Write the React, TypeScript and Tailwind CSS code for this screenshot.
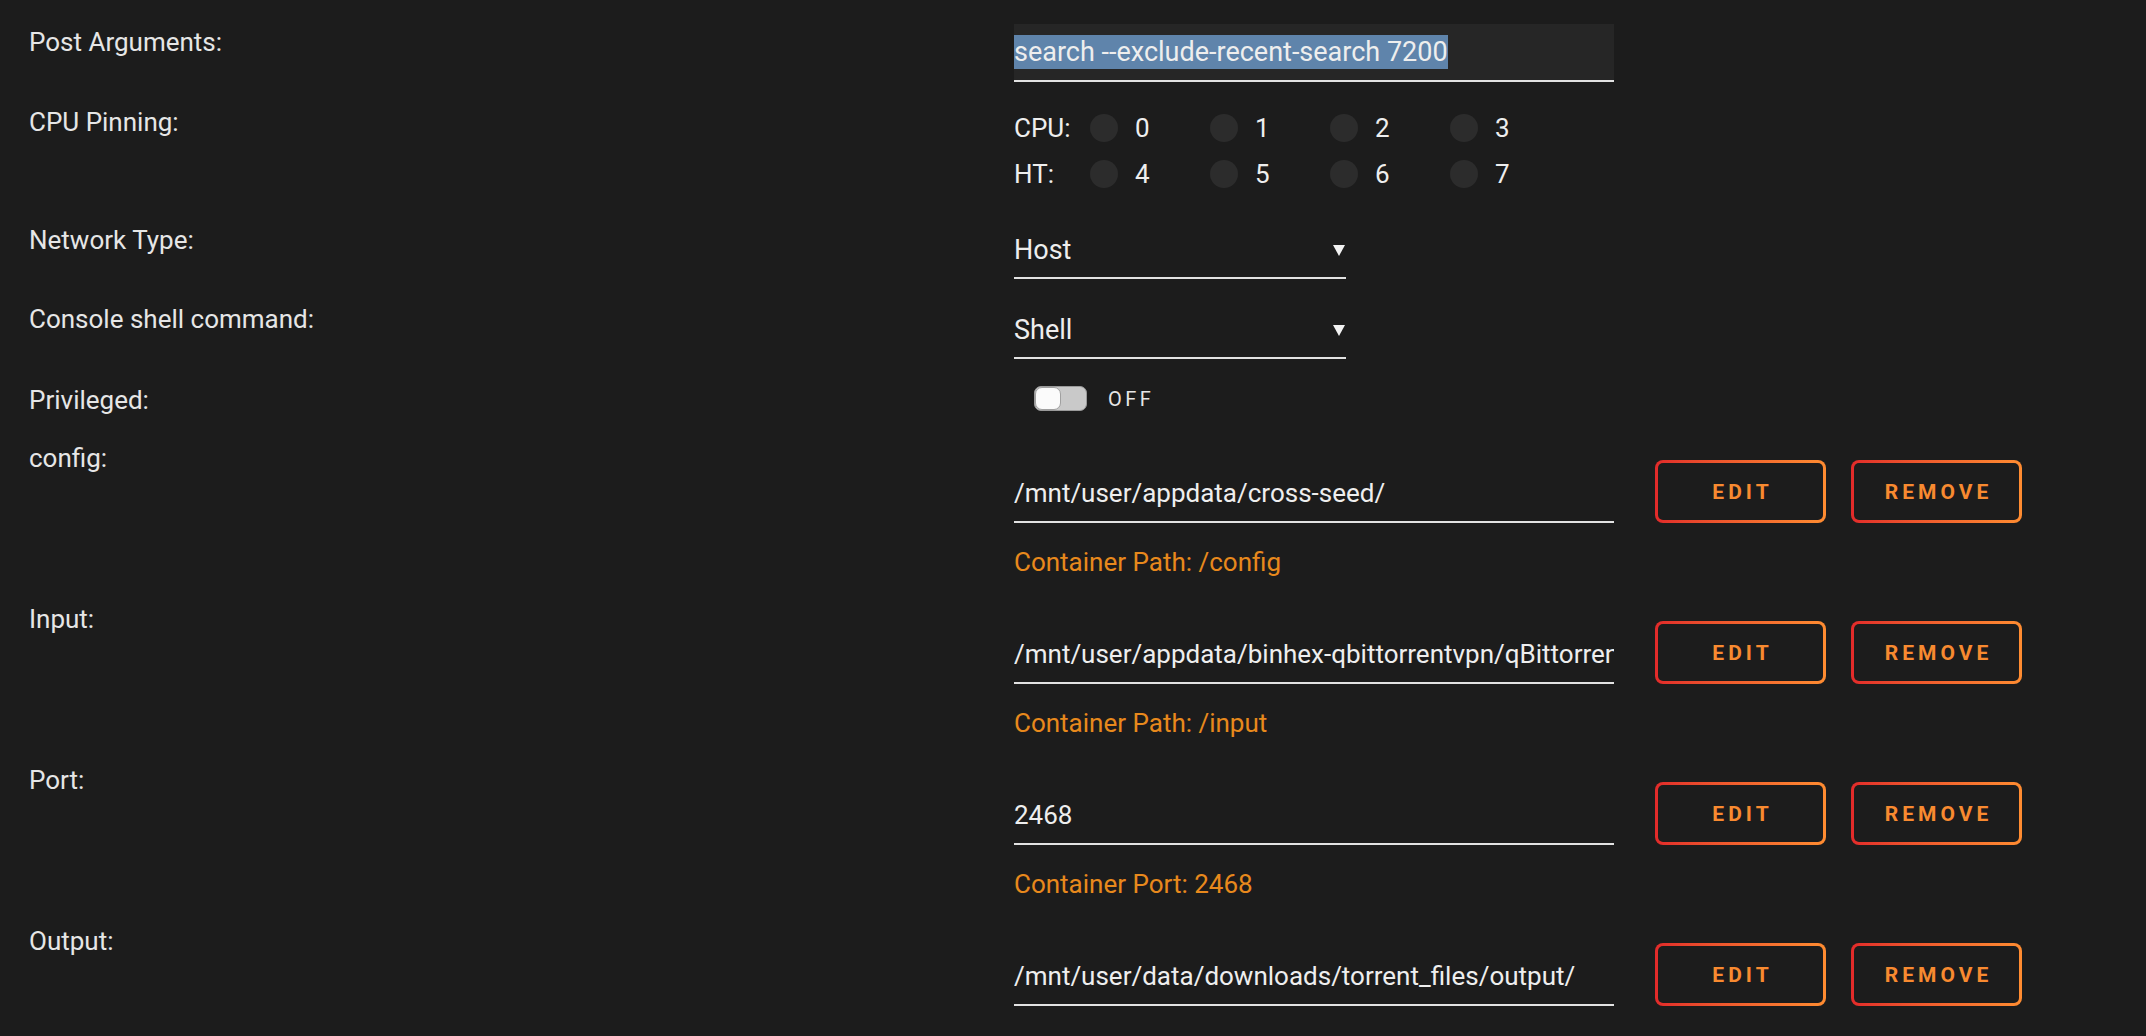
import type { ReactNode } from "react";

type Mapping = {
  label: string;
  host: string;
  hint: string;
};

const MAPPINGS: Mapping[] = [
  { label: "config:", host: "/mnt/user/appdata/cross-seed/", hint: "Container Path: /config" },
  {
    label: "Input:",
    host: "/mnt/user/appdata/binhex-qbittorrentvpn/qBittorrent/data/BT_backup/",
    hint: "Container Path: /input",
  },
  { label: "Port:", host: "2468", hint: "Container Port: 2468" },
  { label: "Output:", host: "/mnt/user/data/downloads/torrent_files/output/", hint: "" },
];

const CPUS = [
  { name: "CPU:", cores: [0, 1, 2, 3] },
  { name: "HT:", cores: [4, 5, 6, 7] },
];

function Label({ children, pad = "pt-0" }: { children: ReactNode; pad?: string }) {
  return (
    <div className={`w-[1014px] shrink-0 pl-[29px] text-[26px] leading-[30px] text-[#e6e6e6] ${pad}`}>
      {children}
    </div>
  );
}

function OutlineButton({ children }: { children: ReactNode }) {
  return (
    <button
      type="button"
      className="h-[63px] w-[171px] rounded-[8px] bg-gradient-to-r from-[#e22a2a] to-[#ff8c31] p-[3px]"
    >
      <span className="flex h-full w-full items-center justify-center rounded-[5px] bg-[#1c1c1c] pl-[4px] pt-[3px] text-[21px] font-bold tracking-[4px] text-[#f88a30]">
        {children}
      </span>
    </button>
  );
}

function Select({ value }: { value: string }) {
  return (
    <div className="flex h-[56px] w-[332px] items-center justify-between border-b-2 border-[#e2e2e2] text-[27px] text-[#eeeeee]">
      <span>{value}</span>
      <svg width="12" height="12" viewBox="0 0 12 12" className="mr-[1px]">
        <polygon points="0,1 12,1 6,12" fill="#f2f2f2" />
      </svg>
    </div>
  );
}

export default function App() {
  return (
    <div className="min-h-screen bg-[#1c1c1c] pt-[24px] font-['Roboto','Liberation_Sans',sans-serif] text-[#eeeeee]">
      {/* post arguments */}
      <div className="flex">
        <Label pad="pt-[3px]">Post Arguments:</Label>
        <div className="flex h-[58px] w-[600px] items-center border-b-2 border-[#e2e2e2] bg-[#262626] text-[27px]">
          <span className="bg-[#5f84ab] leading-[34px]">search --exclude-recent-search 7200</span>
        </div>
      </div>

      {/* cpu pinning */}
      <div className="mt-[23px] flex">
        <Label pad="pt-[2px]">CPU Pinning:</Label>
        <div className="flex flex-col text-[26px]">
          {CPUS.map((row) => (
            <div key={row.name} className="flex h-[46px] items-center">
              <span className="w-[76px]">{row.name}</span>
              {row.cores.map((c) => (
                <div key={c} className="flex w-[120px] items-center gap-[17px]">
                  <span className="h-[28px] w-[28px] rounded-full bg-[#2c2c2c]" />
                  <span>{c}</span>
                </div>
              ))}
            </div>
          ))}
        </div>
      </div>

      <div className="mt-[26px] flex">
        <Label pad="pt-[2px]">Network Type:</Label>
        <Select value="Host" />
      </div>

      <div className="mt-[24px] flex">
        <Label pad="pt-[1px]">Console shell command:</Label>
        <Select value="Shell" />
      </div>

      {/* privileged */}
      <div className="mt-[21px] flex">
        <Label pad="pt-[5px]">Privileged:</Label>
        <div className="flex items-center gap-[21px] pl-[20px] pt-[2px]">
          <div className="flex h-[25px] w-[53px] rounded-[7px] border border-[#9a9a9a] bg-[#c9c9c9]">
            <span className="h-full w-[26px] rounded-[7px] border border-[#a0a0a0] bg-[#fbfbfb]" />
          </div>
          <span className="text-[20px] tracking-[3.5px] text-[#e6e6e6]">OFF</span>
        </div>
      </div>

      {/* path / port mappings */}
      {MAPPINGS.map((m, i) => (
        <div key={m.label} className={`flex ${i === 0 ? "mt-[28px]" : "mt-[27px]"}`}>
          <Label>{m.label}</Label>
          <div className="pt-[17px]">
            <div className="flex items-end gap-[25px]">
              <div className="mr-[16px] h-[58px] w-[600px] overflow-hidden border-b-2 border-[#e2e2e2]">
                <div className="flex h-full w-[600px] items-center overflow-hidden whitespace-nowrap text-[26px] [text-overflow:clip]">
                  {m.host}
                </div>
              </div>
              <OutlineButton>EDIT</OutlineButton>
              <OutlineButton>REMOVE</OutlineButton>
            </div>
            {m.hint && (
              <div className="mt-[24px] text-[26px] leading-[30px] text-[#e8891c]">{m.hint}</div>
            )}
          </div>
        </div>
      ))}
    </div>
  );
}
